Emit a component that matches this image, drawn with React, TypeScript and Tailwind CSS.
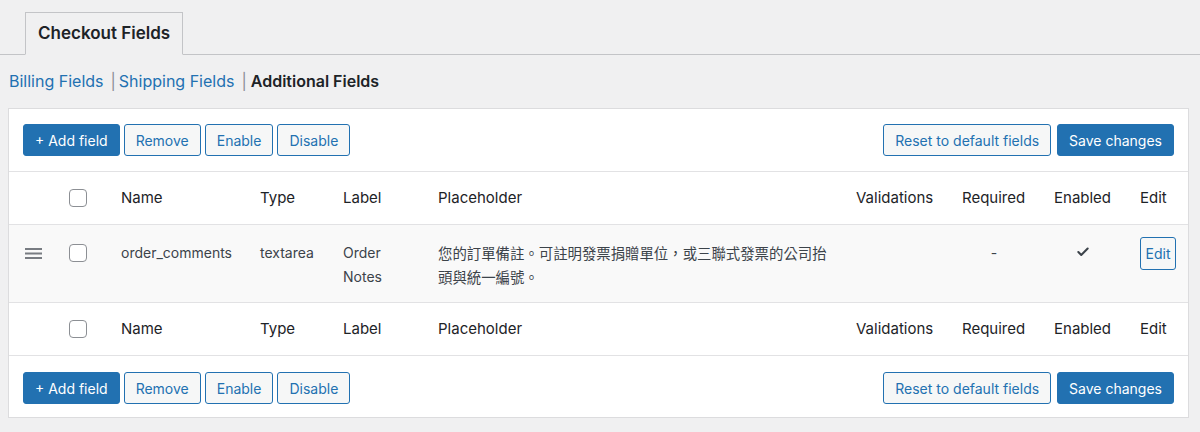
import { Check } from 'lucide-react';

const font = { fontFamily: 'Inter, "Noto Sans CJK TC", sans-serif' };

const cols = 'grid grid-cols-[51px_61px_139px_83px_95px_418px_106px_92px_86px_1fr]';

const SecondaryButton = ({ children }: { children: string }) => (
  <button className="h-8 rounded-[3px] border border-[#2271b1] bg-[#f6f7f7] px-[11px] text-[14px] text-[#2271b1]">
    {children}
  </button>
);

const PrimaryButton = ({ children }: { children: string }) => (
  <button className="h-8 rounded-[3px] border border-[#2271b1] bg-[#2271b1] px-[11px] text-[14px] text-white">
    {children}
  </button>
);

const Checkbox = () => (
  <span className="block h-[18px] w-[18px] rounded-[4px] border border-[#8c8f94] bg-white" />
);

const Toolbar = ({ top }: { top?: boolean }) => (
  <div className={`flex items-center justify-between px-[14px] ${top ? 'py-[15px]' : 'pb-[13px] pt-4'}`}>
    <div className="flex gap-1">
      <PrimaryButton>+ Add field</PrimaryButton>
      <SecondaryButton>Remove</SecondaryButton>
      <SecondaryButton>Enable</SecondaryButton>
      <SecondaryButton>Disable</SecondaryButton>
    </div>
    <div className="flex gap-1.5">
      <SecondaryButton>Reset to default fields</SecondaryButton>
      <PrimaryButton>Save changes</PrimaryButton>
    </div>
  </div>
);

const HeaderRow = () => (
  <div className={`${cols} h-[53px] items-center border-t border-t-[#e2e2e4] text-[15px] text-[#1d2327]`}>
    <div />
    <div className="pl-[9px]">
      <Checkbox />
    </div>
    <div>Name</div>
    <div>Type</div>
    <div>Label</div>
    <div>Placeholder</div>
    <div>Validations</div>
    <div>Required</div>
    <div>Enabled</div>
    <div>Edit</div>
  </div>
);

export default function App() {
  return (
    <div className="min-h-[432px] bg-[#f0f0f1] pt-3" style={font}>
      <div className="flex border-b border-b-[#c3c4c7] pl-[25px]">
        <div className="-mb-px flex h-[43px] items-center border border-[#c3c4c7] border-b-[#f0f0f1] bg-[#f0f0f1] px-3 text-[17px] font-semibold text-[#1d2327]">
          Checkout Fields
        </div>
      </div>

      <div className="flex h-[53px] items-center pb-0.5 pl-[9px] text-[16px]">
        <a className="text-[#2271b1]">Billing Fields</a>
        <span className="ml-[7px] mr-[3px] text-[#8c8f94]">|</span>
        <a className="text-[#2271b1]">Shipping Fields</a>
        <span className="ml-[7px] mr-[4px] text-[#8c8f94]">|</span>
        <span className="font-semibold text-[#1d2327]">Additional Fields</span>
      </div>

      <div className="ml-2 mr-[11px] border border-[#dcdcde] bg-white">
        <Toolbar top />
        <HeaderRow />

        <div className={`${cols} border-t border-t-[#e2e2e4] bg-[#f9f9f9] pb-[13px] pt-[16px] text-[14px] leading-6 text-[#3c434a]`}>
          <div className="flex h-6 items-center pl-[16px]">
            <svg width="17" height="11" viewBox="0 0 17 11">
              <rect y="0" width="17" height="2" fill="#787c82" />
              <rect y="4.5" width="17" height="2" fill="#787c82" />
              <rect y="9" width="17" height="2" fill="#787c82" />
            </svg>
          </div>
          <div className="flex h-6 items-center pl-[9px]">
            <Checkbox />
          </div>
          <div>order_comments</div>
          <div>textarea</div>
          <div className="pr-4">Order Notes</div>
          <div
            lang="zh-TW"
            className="pr-[20px] text-[14.4px] font-['Noto_Sans_CJK_TC',sans-serif]"
          >
            您的訂單備註。可註明發票捐贈單位，或三聯式發票的公司抬頭與統一編號。
          </div>
          <div />
          <div className="w-[64px] text-center">-</div>
          <div className="flex w-[58px] justify-center pt-1">
            <Check size={14} strokeWidth={3.5} className="text-[#3c434a]" />
          </div>
          <div className="-mt-1">
            <span className="flex h-[33px] w-[36px] items-center justify-center rounded-[3px] border border-[#2271b1] bg-[#f6f7f7] text-[14px] text-[#2271b1]">
              Edit
            </span>
          </div>
        </div>

        <HeaderRow />
        <div className="border-t border-t-[#e2e2e4]">
          <Toolbar />
        </div>
      </div>
    </div>
  );
}
